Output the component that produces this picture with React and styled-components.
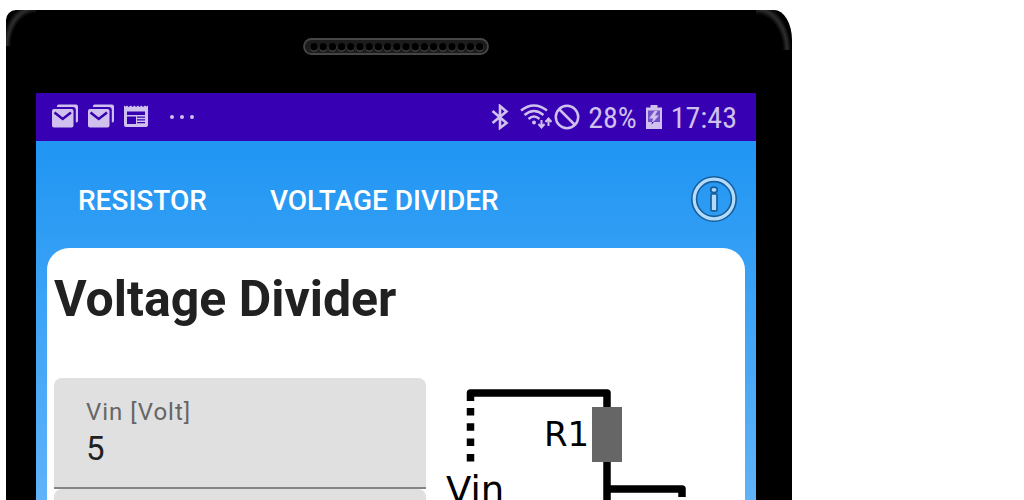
import React from "react";
import styled, { createGlobalStyle } from "styled-components";

const GlobalStyle = createGlobalStyle`
  * { box-sizing: border-box; }
  body { margin: 0; background: #fff; font-family: Roboto, "Liberation Sans", sans-serif; }
`;

const Page = styled.main`
  height: 100vh;
  padding: 10px 6px 0;
  overflow: hidden;
`;

const Phone = styled.div`
  width: 100%;
  max-width: 786px;
  padding: 0 36px 96px 30px;
  background:
    radial-gradient(29px 38px at 30px 36px, #000 86%, #2e2e2e 100%, #000 116%) 0 0 / 30px 36px no-repeat,
    radial-gradient(31px 41px at 0 40px, #000 86%, #2e2e2e 100%, #000 114%) 100% 0 / 36px 40px no-repeat,
    #000;
  border-radius: 10px 18px 30px 30px / 10px 30px 30px 30px;
`;

const Bezel = styled.div`
  display: flex;
  justify-content: center;
  height: 83px;
  padding: 28px 0 0 0;
`;

const Speaker = styled.svg`
  display: block;
  width: 186px;
  height: 17px;
`;

const Screen = styled.div`
  background: linear-gradient(#2196f3 56px, #60b3f8 410px, #90caf9);
  padding-bottom: 12px;
`;

const StatusBar = styled.div`
  display: flex;
  align-items: center;
  justify-content: space-between;
  height: 48px;
  padding: 0 19px 0 15px;
  background: #3700b3;
  color: #cfc0ed;
  font: 30px/48px "Roboto Condensed", Roboto, "Liberation Sans", sans-serif;
`;

const StatusGroup = styled.div`
  display: flex;
  align-items: center;
  gap: ${(p) => p.$gap}px;
`;

const Glyph = styled.svg`
  display: block;
  flex: none;
  width: ${(p) => p.$w}px;
  height: 26px;
`;

const StatusText = styled.span`
  padding-top: 2px;
`;

const TopBar = styled.header`
  display: flex;
  align-items: center;
  justify-content: space-between;
  height: 107px;
  padding: 8px 18px 0 42px;
`;

const Tabs = styled.nav`
  display: flex;
  gap: 63px;
  padding-top: 4px;
`;

const Tab = styled.button`
  padding: 0;
  border: 0;
  background: none;
  color: #fff;
  font: 500 28px/40px Roboto, "Liberation Sans", sans-serif;
  text-transform: uppercase;
  cursor: pointer;
`;

const InfoButton = styled.button`
  display: flex;
  padding: 0;
  border: 0;
  background: none;
  cursor: pointer;

  svg { display: block; width: 48px; height: 48px; }
`;

const Card = styled.section`
  margin: 0 11px;
  padding: 16px 7px 24px;
  background: #fff;
  border-radius: 22px;
`;

const Title = styled.h1`
  margin: 0 0 44px;
  color: #212121;
  font-size: 50px;
  line-height: 70px;
  font-weight: 700;
`;

const Columns = styled.div`
  display: grid;
  grid-template-columns: 372fr 298fr;
  gap: 14px;
  align-items: start;
`;

const Fields = styled.div`
  display: flex;
  flex-direction: column;
`;

const Field = styled.label`
  display: block;
  height: 111px;
  padding: 18px 32px 0;
  background: linear-gradient(#858585, #858585) 0 100% / 100% 2px no-repeat #e0e0e0;
  border-radius: 8px 8px 0 0;
  color: #666;
  font-size: 24px;
  line-height: 32px;
  letter-spacing: 1px;
`;

const FieldInput = styled.input`
  display: block;
  width: 100%;
  height: 42px;
  padding: 0;
  border: 0;
  outline: 0;
  background: none;
  color: #212121;
  font: 33px/42px Roboto, "Liberation Sans", sans-serif;
`;

const Circuit = styled.svg`
  display: block;
  width: 100%;
  font-family: "DejaVu Sans", sans-serif;
`;

const holes = Array.from({ length: 19 }, (_, i) => 11 + i * 9.2);

const MailIcon = () => (
  <Glyph $w={28} viewBox="0 0 28 26">
    <path d="M6 2.500V2q0-1.500 1.500-1.500H25q2 0 2 2V17q0 1.500-2.200 1.500V6q0-3-3-3H6z" fill="currentColor" />
    <rect x="1" y="5" width="21.500" height="18.500" rx="2" fill="currentColor" />
    <path d="M3.500 8.500l8.200 6.500L20 8.500" fill="none" stroke="#3700b3" strokeWidth="2.500" />
  </Glyph>
);

const NewsIcon = () => (
  <Glyph $w={26} viewBox="0 0 26 26">
    <path d="M1 1.500l1.500 1 1.500-1 1.500 1.500L8 1.500l1.500 1.500L11.500 1.500 13 3l2-1.500L16.500 3l2-1.500L20 3l2-1.500L23.500 2.500l1.500-1V21q0 2-2 2H3q-2 0-2-2z" fill="currentColor" />
    <path d="M4 7.500h18v3.500H4zM4 12.500h9V20H4zM14 12.500h8v1.200h-8zM14 15.200h8v1.300h-8zM14 18h8v1.200h-8z" fill="#3700b3" />
  </Glyph>
);

const MoreDots = () => (
  <Glyph $w={26} viewBox="0 0 26 26">
    <g fill="currentColor"><circle cx="3" cy="13" r="2" /><circle cx="13" cy="13" r="2" /><circle cx="23" cy="13" r="2" /></g>
  </Glyph>
);

const BluetoothIcon = () => (
  <Glyph $w={18} viewBox="0 0 18 26">
    <path d="M1.500 7L15.500 19 9 24V2L15.500 7.500 1.500 19" fill="none" stroke="currentColor" strokeWidth="2.600" />
  </Glyph>
);

const WifiIcon = () => (
  <Glyph $w={32} viewBox="0 0 32 26">
    <g fill="none" stroke="currentColor" strokeWidth="2.400">
      <path d="M1 6.500Q14-3.500 27 6.500" />
      <path d="M4.500 11Q14 3 23.500 11" />
      <path d="M8.500 15Q14 10 19.500 15" />
      <path d="M21.500 16v7M18.500 20l3 3.500 3-3.500M28.500 22v-7M25.500 18l3-3.500 3 3.500" strokeWidth="2" />
    </g>
    <circle cx="14" cy="18.500" r="2" fill="currentColor" />
  </Glyph>
);

const BlockedIcon = () => (
  <Glyph $w={26} viewBox="0 0 26 26">
    <g fill="none" stroke="currentColor" strokeWidth="2.500">
      <circle cx="13" cy="13" r="11.200" />
      <path d="M5 5l16 16" />
    </g>
  </Glyph>
);

const BatteryIcon = () => (
  <Glyph $w={18} viewBox="0 0 18 26">
    <path d="M5.500 1h7v2.500H17V25H1V3.500h4.500z" fill="currentColor" />
    <path d="M3 6.500h12v11.500H3z" fill="#7350c9" />
    <path d="M9.500 7L4 14.500h4L6.500 20 14 11.500h-4L12.500 7z" fill="currentColor" />
    <path d="M7 18l2-.3-2.500 3z" fill="#3700b3" />
  </Glyph>
);

export default function App() {
  return (
    <>
      <GlobalStyle />
      <Page>
        <Phone>
          <Bezel>
            <Speaker viewBox="0 0 186 17" aria-hidden="true">
              <rect x="1" y="1" width="184" height="15" rx="7.500" fill="#1c1c1c" stroke="#464646" strokeWidth="1.800" />
              {holes.map((x) => (
                <g key={x}>
                  <circle cx={x} cy="9.500" r="4.200" fill="#484848" />
                  <circle cx={x} cy="8.800" r="3.800" fill="#000" />
                </g>
              ))}
            </Speaker>
          </Bezel>
          <Screen>
            <StatusBar>
              <StatusGroup $gap={8}>
                <MailIcon />
                <MailIcon />
                <StatusGroup $gap={20}>
                  <NewsIcon />
                  <MoreDots />
                </StatusGroup>
              </StatusGroup>
              <StatusGroup $gap={8}>
                <StatusGroup $gap={11}>
                  <BluetoothIcon />
                  <StatusGroup $gap={2}>
                    <WifiIcon />
                    <BlockedIcon />
                  </StatusGroup>
                </StatusGroup>
                <StatusText>28%</StatusText>
                <BatteryIcon />
                <StatusText>17:43</StatusText>
              </StatusGroup>
            </StatusBar>
            <TopBar>
              <Tabs>
                <Tab type="button">Resistor</Tab>
                <Tab type="button">Voltage Divider</Tab>
              </Tabs>
              <InfoButton type="button" aria-label="Information">
                <svg viewBox="0 0 48 48">
                  <circle cx="24" cy="24" r="19.800" fill="none" stroke="#175f9c" strokeWidth="6.400" />
                  <circle cx="24" cy="24" r="19.800" fill="none" stroke="#b3dbfb" strokeWidth="3.200" />
                  <ellipse cx="24" cy="14.800" rx="3.300" ry="2.700" fill="#b3dbfb" stroke="#175f9c" strokeWidth="1.700" />
                  <rect x="21" y="18.800" width="6" height="17" rx="1" fill="#b3dbfb" stroke="#175f9c" strokeWidth="1.700" />
                </svg>
              </InfoButton>
            </TopBar>
            <Card>
              <Title>Voltage Divider</Title>
              <Columns>
                <Fields>
                  <Field>
                    Vin [Volt]
                    <FieldInput defaultValue="5" inputMode="decimal" />
                  </Field>
                  <Field>
                    <FieldInput inputMode="decimal" aria-label="Resistor value" />
                  </Field>
                </Fields>
                <Circuit viewBox="0 0 298 200" role="img" aria-label="Voltage divider circuit">
                  <path d="M30.500 23V15H167V140M167 111H242V119" fill="none" stroke="#000" strokeWidth="7.500" strokeLinejoin="round" />
                  <path d="M30.500 30v56" stroke="#000" strokeWidth="7.500" strokeDasharray="7.500 7.800" />
                  <rect x="152" y="29" width="30" height="55" fill="#666" />
                  <text x="104" y="68" fontSize="34">R1</text>
                  <text x="6" y="125" fontSize="37">Vin</text>
                </Circuit>
              </Columns>
            </Card>
          </Screen>
        </Phone>
      </Page>
    </>
  );
}
